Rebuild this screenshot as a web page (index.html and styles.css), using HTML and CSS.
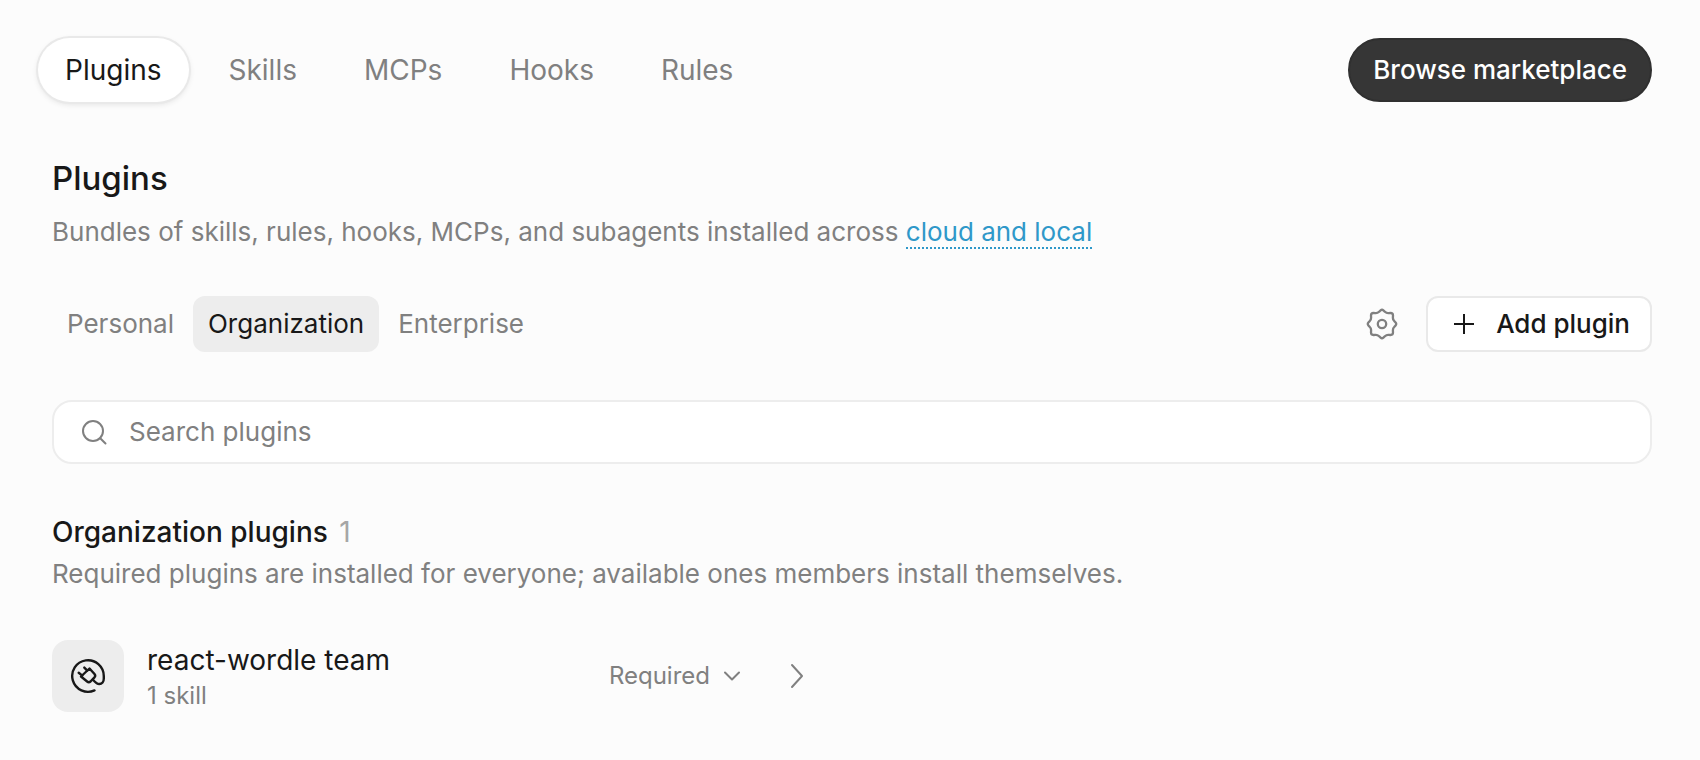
FILE: index.html
```html
<!DOCTYPE html>
<html lang="en">
<head>
    <meta charset="UTF-8">
    <meta name="viewport" content="width=device-width, initial-scale=1.0">
    <title>Plugins</title>
    <link rel="stylesheet" href="styles.css">
</head>
<body>
    <header class="topbar">
        <nav class="tabs">
            <button class="tab active">Plugins</button>
            <button class="tab">Skills</button>
            <button class="tab">MCPs</button>
            <button class="tab">Hooks</button>
            <button class="tab">Rules</button>
        </nav>
        <button class="browse">Browse marketplace</button>
    </header>

    <main>
        <h1>Plugins</h1>
        <p class="intro">Bundles of skills, rules, hooks, MCPs, and subagents installed across <a href="#">cloud and local</a></p>

        <div class="toolbar">
            <div class="scopes">
                <button class="scope">Personal</button>
                <button class="scope active">Organization</button>
                <button class="scope">Enterprise</button>
            </div>
            <div class="actions">
                <button class="icon-button" aria-label="Settings">
                    <svg width="32" height="32" viewBox="-16 -16 32 32" fill="none" stroke="currentColor" stroke-width="2.3" stroke-linejoin="round">
                        <path d="M-3 -12.2L-1.4 -13.6Q0 -14.8 1.4 -13.6L3 -12.2Q4.4 -10.8 6.4 -10.9L8.6 -11Q11 -11 11 -8.6L10.9 -6.4Q10.8 -4.4 12.2 -3L13.6 -1.4Q14.8 0 13.6 1.4L12.2 3Q10.8 4.4 10.9 6.4L11 8.6Q11 11 8.6 11L6.4 10.9Q4.4 10.8 3 12.2L1.4 13.6Q0 14.8 -1.4 13.6L-3 12.2Q-4.4 10.8 -6.4 10.9L-8.6 11Q-11 11 -11 8.6L-10.9 6.4Q-10.8 4.4 -12.2 3L-13.6 1.4Q-14.8 0 -13.6 -1.4L-12.2 -3Q-10.8 -4.4 -10.9 -6.4L-11 -8.6Q-11 -11 -8.6 -11L-6.4 -10.9Q-4.4 -10.8 -3 -12.2Z"/>
                        <circle r="4.2"/>
                    </svg>
                </button>
                <button class="add">
                    <svg width="20" height="20" viewBox="0 0 20 20" fill="none" stroke="currentColor" stroke-width="2">
                        <path d="M10 0v20M0 10h20"/>
                    </svg>
                    Add plugin
                </button>
            </div>
        </div>

        <label class="search">
            <svg width="26" height="26" viewBox="0 0 26 26" fill="none" stroke="currentColor" stroke-width="2" stroke-linecap="round">
                <circle cx="12" cy="12" r="10"/>
                <path d="M19.2 19.2L24.5 24.5"/>
            </svg>
            <input type="text" placeholder="Search plugins" aria-label="Search plugins">
        </label>

        <section>
            <h2>Organization plugins <span class="count">1</span></h2>
            <p class="hint">Required plugins are installed for everyone; available ones members install themselves.</p>

            <div class="plugin-grid">
                <div class="plugin">
                    <div class="plugin-icon">
                        <svg width="36" height="36" viewBox="0 0 36 36" fill="none" stroke="currentColor" stroke-width="2.4" stroke-linecap="round" stroke-linejoin="round">
                            <path d="M24.5 32.4A15.800 15.800 0 1 1 33.800 18v2.500c0 3.200-1.800 5.500-4.600 5.500-2.600 0-4-1.800-6.200-4.300"/>
                            <path d="M11 18.500L19.500 10.500 24.500 16q1.400 1.700 0 3.300L20.500 23.500q-1.700 1.500-3.400 0z"/>
                            <path d="M8.700 14.700l3.600 2.900M14.300 9.600l3 3"/>
                        </svg>
                    </div>
                    <div class="plugin-text">
                        <div class="plugin-name">react-wordle team</div>
                        <div class="plugin-meta">1 skill</div>
                    </div>
                    <button class="status">
                        Required
                        <svg width="16" height="10" viewBox="0 0 16 10" fill="none" stroke="currentColor" stroke-width="2" stroke-linecap="round" stroke-linejoin="round">
                            <path d="M1 1.500l7 7 7-7"/>
                        </svg>
                    </button>
                    <button class="open" aria-label="Open react-wordle team">
                        <svg width="14" height="26" viewBox="0 0 14 26" fill="none" stroke="currentColor" stroke-width="2" stroke-linecap="round" stroke-linejoin="round">
                            <path d="M2 2l10 11L2 24"/>
                        </svg>
                    </button>
                </div>
            </div>
        </section>
    </main>
</body>
</html>
```
FILE: styles.css
```css
* {
    box-sizing: border-box;
}
body {
    margin: 0;
    padding: 38px 48px 48px 38px;
    background: #fcfcfc;
    color: #181818;
    font-family: Inter, sans-serif;
    font-size: 26px;
    line-height: 36px;
}
h1, h2, p {
    margin: 0;
}
button {
    border: 0;
    padding: 0;
    background: none;
    color: inherit;
    font: inherit;
    cursor: pointer;
}
svg {
    display: block;
    flex: none;
}
.topbar {
    display: flex;
    justify-content: space-between;
}
.tabs {
    display: flex;
    gap: 13px;
}
.tab {
    height: 64px;
    padding: 0 27px;
    border-radius: 32px;
    color: #808080;
    font-size: 28px;
}
.tab.active {
    background: #fff;
    color: #181818;
    box-shadow: 0 0 0 2px #e9e9e9, 0 2px 6px rgba(0, 0, 0, 0.12);
}
.browse {
    height: 64px;
    padding: 0 23px;
    border: 2px solid #303030;
    border-radius: 32px;
    background: #363636;
    color: #fff;
    font-weight: 500;
}
main {
    padding: 54px 0 0 14px;
}
h1 {
    font-size: 33px;
    font-weight: 500;
    line-height: 44px;
}
.intro {
    margin-top: 14px;
    color: #808080;
}
.intro a {
    border-bottom: 2px dotted #2f98c9;
    color: #2f98c9;
    line-height: 30px;
    text-decoration: none;
}
.toolbar {
    display: flex;
    justify-content: space-between;
    margin-top: 46px;
}
.scopes {
    display: flex;
    gap: 4px;
}
.scope {
    height: 56px;
    padding: 0 15px;
    border-radius: 12px;
    color: #808080;
}
.scope.active {
    background: #ededed;
    color: #181818;
}
.actions {
    display: flex;
    gap: 16px;
}
.icon-button {
    display: flex;
    align-items: center;
    justify-content: center;
    width: 56px;
    color: #808080;
}
.add {
    display: flex;
    align-items: center;
    gap: 22px;
    height: 56px;
    padding: 0 20px 0 26px;
    border: 2px solid #e9e9e9;
    border-radius: 12px;
    background: #fff;
    font-weight: 500;
}
.search {
    display: flex;
    align-items: center;
    gap: 22px;
    height: 64px;
    margin-top: 48px;
    padding: 0 27px;
    border: 2px solid #ededed;
    border-radius: 20px;
    background: #fff;
    color: #808080;
}
.search input {
    flex: 1;
    min-width: 0;
    padding: 0;
    border: 0;
    outline: 0;
    background: none;
    color: #181818;
    font: inherit;
}
.search input::placeholder {
    color: #808080;
    opacity: 1;
}
section {
    margin-top: 48px;
}
h2 {
    font-size: 28px;
    font-weight: 500;
    line-height: 40px;
}
.count {
    margin-left: 4px;
    color: #a6a6a6;
    font-weight: 400;
}
.hint {
    margin-top: 4px;
    color: #808080;
}
.plugin-grid {
    display: grid;
    grid-template-columns: 1fr 1fr;
    gap: 32px;
    margin-top: 48px;
}
.plugin {
    display: flex;
    align-items: center;
    padding-right: 32px;
}
.plugin-icon {
    display: flex;
    align-items: center;
    justify-content: center;
    width: 72px;
    height: 72px;
    border-radius: 16px;
    background: #ededed;
}
.plugin-text {
    flex: 1;
    margin-left: 23px;
}
.plugin-name {
    font-size: 28px;
    line-height: 40px;
}
.plugin-meta {
    color: #808080;
    font-size: 24px;
    line-height: 32px;
}
.status {
    display: flex;
    align-items: center;
    gap: 14px;
    color: #808080;
    font-size: 24px;
}
.open {
    margin-left: 50px;
    color: #808080;
}
```
